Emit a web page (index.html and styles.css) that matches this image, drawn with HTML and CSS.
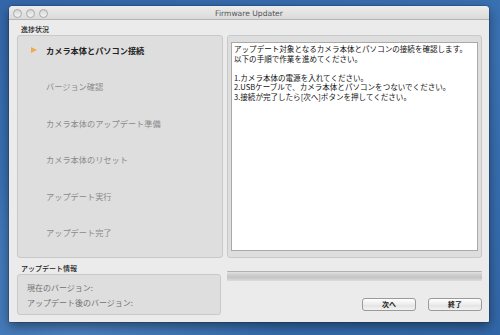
FILE: index.html
```html
<!DOCTYPE html>
<html lang="ja">
<head>
<meta charset="UTF-8" />
<title>Firmware Updater</title>
<link rel="stylesheet" href="styles.css">
</head>
<body>

<!-- WINDOW -->
<div class="window">
  <div class="titlebar">
    <div class="lights">
      <span></span>
      <span></span>
      <span></span>
    </div>
    <div class="title">Firmware Updater</div>
  </div>

  <div class="content">
    <!-- PROGRESS STEPS -->
    <div class="group-label">進捗状況</div>
    <div class="panels">
      <ul class="steps">
        <li class="active">カメラ本体とパソコン接続</li>
        <li>バージョン確認</li>
        <li>カメラ本体のアップデート準備</li>
        <li>カメラ本体のリセット</li>
        <li>アップデート実行</li>
        <li>アップデート完了</li>
      </ul>
      <div class="detail">
        <div class="detail-text">
          <p>アップデート対象となるカメラ本体とパソコンの接続を確認します。<br>以下の手順で作業を進めてください。</p>
          <p>1.カメラ本体の電源を入れてください。<br>2.USBケーブルで、カメラ本体とパソコンをつないでください。<br>3.接続が完了したら[次へ]ボタンを押してください。</p>
        </div>
      </div>
    </div>

    <!-- UPDATE INFO -->
    <div class="bottom">
      <div class="info">
        <div class="group-label">アップデート情報</div>
        <div class="info-box">
          <div>現在のバージョン:</div>
          <div>アップデート後のバージョン:</div>
        </div>
      </div>
      <div class="actions">
        <div class="progress"></div>
        <div class="buttons">
          <button class="btn">次へ</button>
          <button class="btn">終了</button>
        </div>
      </div>
    </div>
  </div>
</div>

</body>
</html>
```

FILE: styles.css
```css
/* Reset */
*, *::before, *::after {
  box-sizing: border-box;
}
body, p, ul, li, button {
  margin: 0;
  padding: 0;
}
ul {
  list-style: none;
}

body {
  width: 500px;
  height: 335px;
  overflow: hidden;
  padding: 6px 0 0 9px;
  font-family: "Noto Sans CJK JP", "Liberation Sans", sans-serif;
  color: #222;
  background:
    radial-gradient(ellipse at 15% 100%, rgba(120, 170, 230, 0.3), transparent 35%),
    linear-gradient(160deg, #3467a9 0%, #3b73b4 45%, #3166a6 100%);
}

/* Window */
.window {
  width: 480px;
  height: 316px;
  background: #ebebeb;
  border-radius: 4px 4px 1px 1px;
  box-shadow: 0 4px 12px rgba(0, 0, 0, 0.45), 0 0 0 1px rgba(0, 0, 0, 0.15);
  overflow: hidden;
}
.titlebar {
  height: 14px;
  position: relative;
  display: flex;
  align-items: center;
  justify-content: center;
  background: linear-gradient(#ececec, #dadada);
  border-bottom: 1px solid #b4b4b4;
}
.lights {
  position: absolute;
  left: 4px;
  top: 3px;
  display: flex;
  gap: 4px;
}
.lights span {
  width: 9px;
  height: 9px;
  border-radius: 50%;
  border: 1px solid #a8a8a8;
  background: linear-gradient(#d6d6d6, #f4f4f4);
}
.title {
  font-family: "DejaVu Sans", sans-serif;
  font-size: 7.6px;
  color: #555;
  padding-top: 1px;
}

/* Content */
.content {
  padding: 4px 7px 0 8px;
}
.group-label {
  font-size: 7px;
  font-weight: 500;
  line-height: 10px;
  padding-left: 4px;
  margin-bottom: 1px;
  color: #222;
}
.panels {
  display: flex;
  gap: 4px;
  height: 223px;
}
.steps, .detail, .info-box {
  background: #dedede;
  border: 1px solid #c9c9c9;
  border-radius: 3px;
}
.steps {
  width: 206px;
  padding: 8px 0 0 28px;
  display: flex;
  flex-direction: column;
  gap: 24.4px;
}
.steps li {
  font-size: 8.2px;
  line-height: 12px;
  color: #8a8a8a;
  position: relative;
}
.steps li.active {
  color: #222;
  font-weight: bold;
}
.steps li.active::before {
  content: "";
  position: absolute;
  left: -15px;
  top: 3px;
  border-left: 6px solid #f2a94e;
  border-top: 3.5px solid transparent;
  border-bottom: 3.5px solid transparent;
}
.detail {
  width: 255px;
  padding: 6px 3px 6px 3px;
}
.detail-text {
  height: 100%;
  background: #fff;
  border: 1px solid #a9a9a9;
  padding: 1px 2px;
  font-size: 7.55px;
  line-height: 9.5px;
  color: #111;
}
.detail-text p {
  margin-bottom: 9.5px;
}

/* Bottom */
.bottom {
  display: flex;
  gap: 4px;
  margin-top: 5px;
}
.info {
  width: 206px;
}
.info-box {
  width: 204px;
  height: 41px;
  padding: 5px 0 0 9px;
  font-size: 8px;
  line-height: 15px;
  color: #707070;
}
.actions {
  width: 256px;
  padding-top: 8px;
}
.progress {
  height: 10px;
  border-top: 1px solid #b0b0b0;
  background: linear-gradient(#e2e2e2 0%, #cfcfcf 30%, #c4c4c4 60%, #dcdcdc 100%);
  border-radius: 1px;
}
.buttons {
  display: flex;
  justify-content: flex-end;
  gap: 12px;
  margin-top: 17px;
}
.btn {
  width: 54px;
  height: 13px;
  font-family: "Noto Sans CJK JP", sans-serif;
  font-size: 7px;
  font-weight: bold;
  line-height: 11px;
  color: #222;
  border: 1px solid #9a9a9a;
  border-radius: 3px;
  background: linear-gradient(#ffffff, #ececec 50%, #e2e2e2 51%, #f2f2f2);
}
```
